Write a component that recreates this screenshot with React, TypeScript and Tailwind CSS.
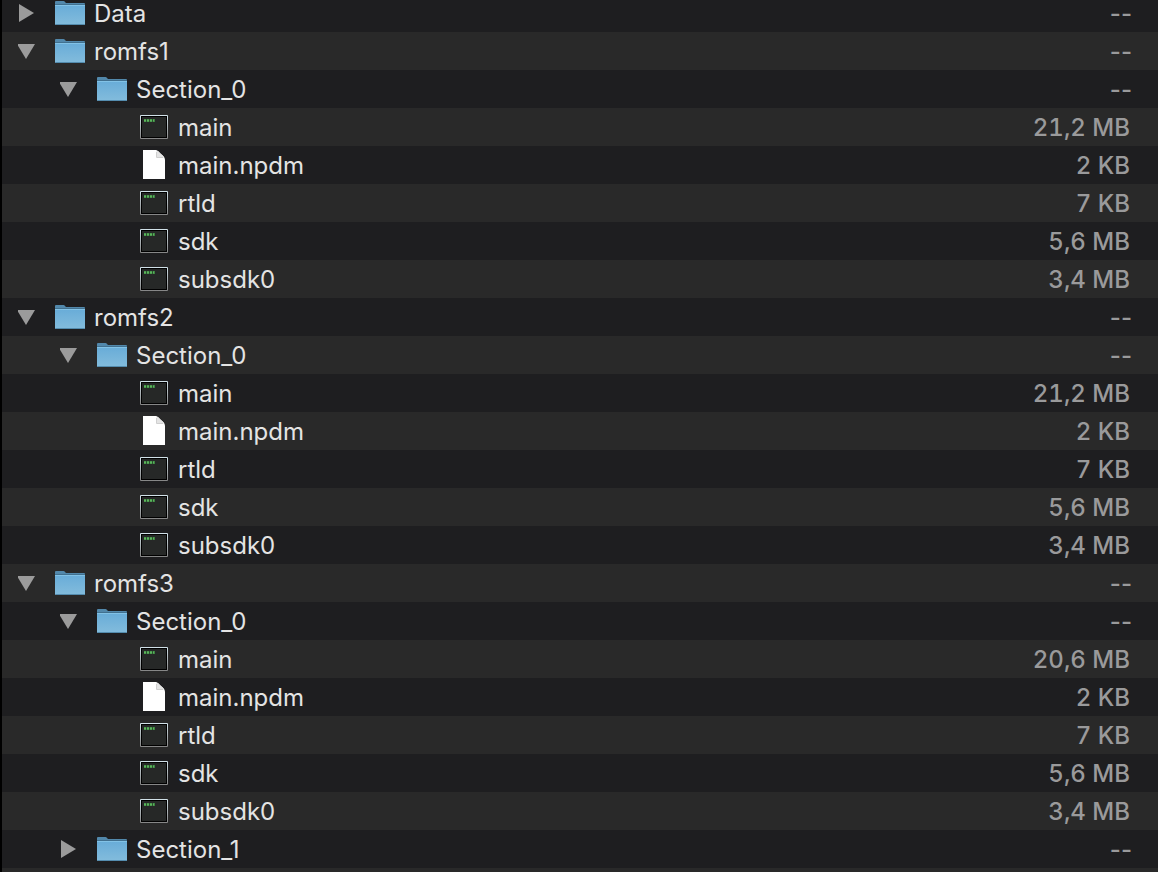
import { useId } from 'react';
import clsx from 'clsx';

type Kind = 'folder' | 'exec' | 'document';

interface Entry {
  name: string;
  kind: Kind;
  level: number;
  size?: string;
  open?: boolean;
}

const INDENT = ['pl-4', 'pl-[58px]', 'pl-[100px]'];

function section(mainSize: string): Entry[] {
  return [
    { name: 'Section_0', kind: 'folder', level: 1, open: true },
    { name: 'main', kind: 'exec', level: 2, size: mainSize },
    { name: 'main.npdm', kind: 'document', level: 2, size: '2 KB' },
    { name: 'rtld', kind: 'exec', level: 2, size: '7 KB' },
    { name: 'sdk', kind: 'exec', level: 2, size: '5,6 MB' },
    { name: 'subsdk0', kind: 'exec', level: 2, size: '3,4 MB' },
  ];
}

const ENTRIES: Entry[] = [
  { name: 'Data', kind: 'folder', level: 0 },
  { name: 'romfs1', kind: 'folder', level: 0, open: true },
  ...section('21,2 MB'),
  { name: 'romfs2', kind: 'folder', level: 0, open: true },
  ...section('21,2 MB'),
  { name: 'romfs3', kind: 'folder', level: 0, open: true },
  ...section('20,6 MB'),
  { name: 'Section_1', kind: 'folder', level: 1 },
];

function FolderIcon() {
  const id = useId();
  return (
    <svg width="30" height="26" viewBox="0 0 30 26" aria-hidden="true">
      <defs>
        <linearGradient id={id} x1="0" y1="0" x2="0" y2="1">
          <stop offset="0" stopColor="#68acd8" />
          <stop offset="1" stopColor="#83bcdc" />
        </linearGradient>
      </defs>
      <path d="M0 2Q0 1 1 1H8.5Q9.5 1 10 2L11 3H29Q30 3 30 4V10H0Z" fill="#5288ab" />
      <path d="M0 5H30V24Q30 25 29 25H1Q0 25 0 24Z" fill={`url(#${id})`} />
      <path d="M0 4.5H30" stroke="#41708f" />
      <path d="M0 5.5H30" stroke="#82c2e6" />
      <path d="M0.5 24.5H29.5" stroke="#548cae" />
    </svg>
  );
}

function ExecIcon() {
  const id = useId();
  return (
    <svg width="30" height="26" viewBox="0 0 30 26" aria-hidden="true">
      <defs>
        <linearGradient id={id} x1="0" y1="0" x2="0" y2="1">
          <stop offset="0" stopColor="#d3e3ea" />
          <stop offset="1" stopColor="#858585" />
        </linearGradient>
      </defs>
      <rect x="1" y="1" width="28" height="24" rx="1" fill={`url(#${id})`} />
      <rect x="2" y="2" width="26" height="22" fill="#000000" />
      <rect x="3" y="3" width="24" height="20" fill="#262827" />
      <path d="M5 6.5H16" stroke="#3c7f40" strokeWidth="3" />
      <path d="M5 6.5H7M8 6.5H10M11 6.5H13M14 6.5H15" stroke="#5bb55c" strokeWidth="2" />
      <path d="M7.5 5V8M10.5 5V8M13.5 5V8" stroke="#2b4f2e" />
    </svg>
  );
}

function DocumentIcon() {
  return (
    <svg width="30" height="30" viewBox="0 0 30 30" aria-hidden="true">
      <path d="M4 0H17Q19 0.5 22 4Q26 7 26 10V29H4Z" fill="#ffffff" />
      <path d="M17 0Q18 1 18 7.5H25Q26 8 26 10Q26 7 22 4Q19 0.5 17 0Z" fill="#e4e4e4" />
      <path d="M17.5 2V7.5H24" fill="none" stroke="#cfcfcf" />
    </svg>
  );
}

const ICONS = {
  folder: FolderIcon,
  exec: ExecIcon,
  document: DocumentIcon,
};

function Disclosure({ name, open }: { name: string; open?: boolean }) {
  return (
    <button type="button" aria-expanded={!!open} aria-label={name} className="w-[18px] flex-none">
      <svg width="18" height="18" viewBox="0 0 18 18" className="block" aria-hidden="true">
        <path d={open ? 'M-1 2H17L8 17Z' : 'M1 0V18L16 9Z'} fill="#9b9b9b" />
      </svg>
    </button>
  );
}

function Row({ entry }: { entry: Entry }) {
  const Icon = ICONS[entry.kind];
  return (
    <tr className="h-[38px] odd:bg-[#1e1e20] even:bg-[#292929]">
      <td className="p-0">
        <div className={clsx('flex items-center', INDENT[entry.level])}>
          {entry.kind === 'folder' ? (
            <Disclosure name={entry.name} open={entry.open} />
          ) : (
            <span className="w-[18px] flex-none" />
          )}
          <span className="ml-[19px] mr-[9px] flex w-[30px] flex-none justify-center">
            <Icon />
          </span>
          <span className="pt-0.5 text-[#e4e4e4]">{entry.name}</span>
        </div>
      </td>
      <td
        className={clsx(
          'p-0 pt-0.5 text-right whitespace-nowrap text-[#9a9a9b]',
          entry.size ? 'pr-7 font-[450] tabular-nums' : 'pr-[26px] font-medium',
        )}
      >
        {entry.size ?? '--'}
      </td>
    </tr>
  );
}

export default function App() {
  return (
    <main className="min-h-screen overflow-hidden border-l-2 border-black bg-[#292929] font-['Inter','Liberation_Sans',sans-serif] text-2xl leading-6">
      <table className="-mt-1.5 w-full border-collapse" aria-label="Files">
        <tbody>
          {ENTRIES.map((entry, i) => (
            <Row key={i} entry={entry} />
          ))}
        </tbody>
      </table>
    </main>
  );
}
